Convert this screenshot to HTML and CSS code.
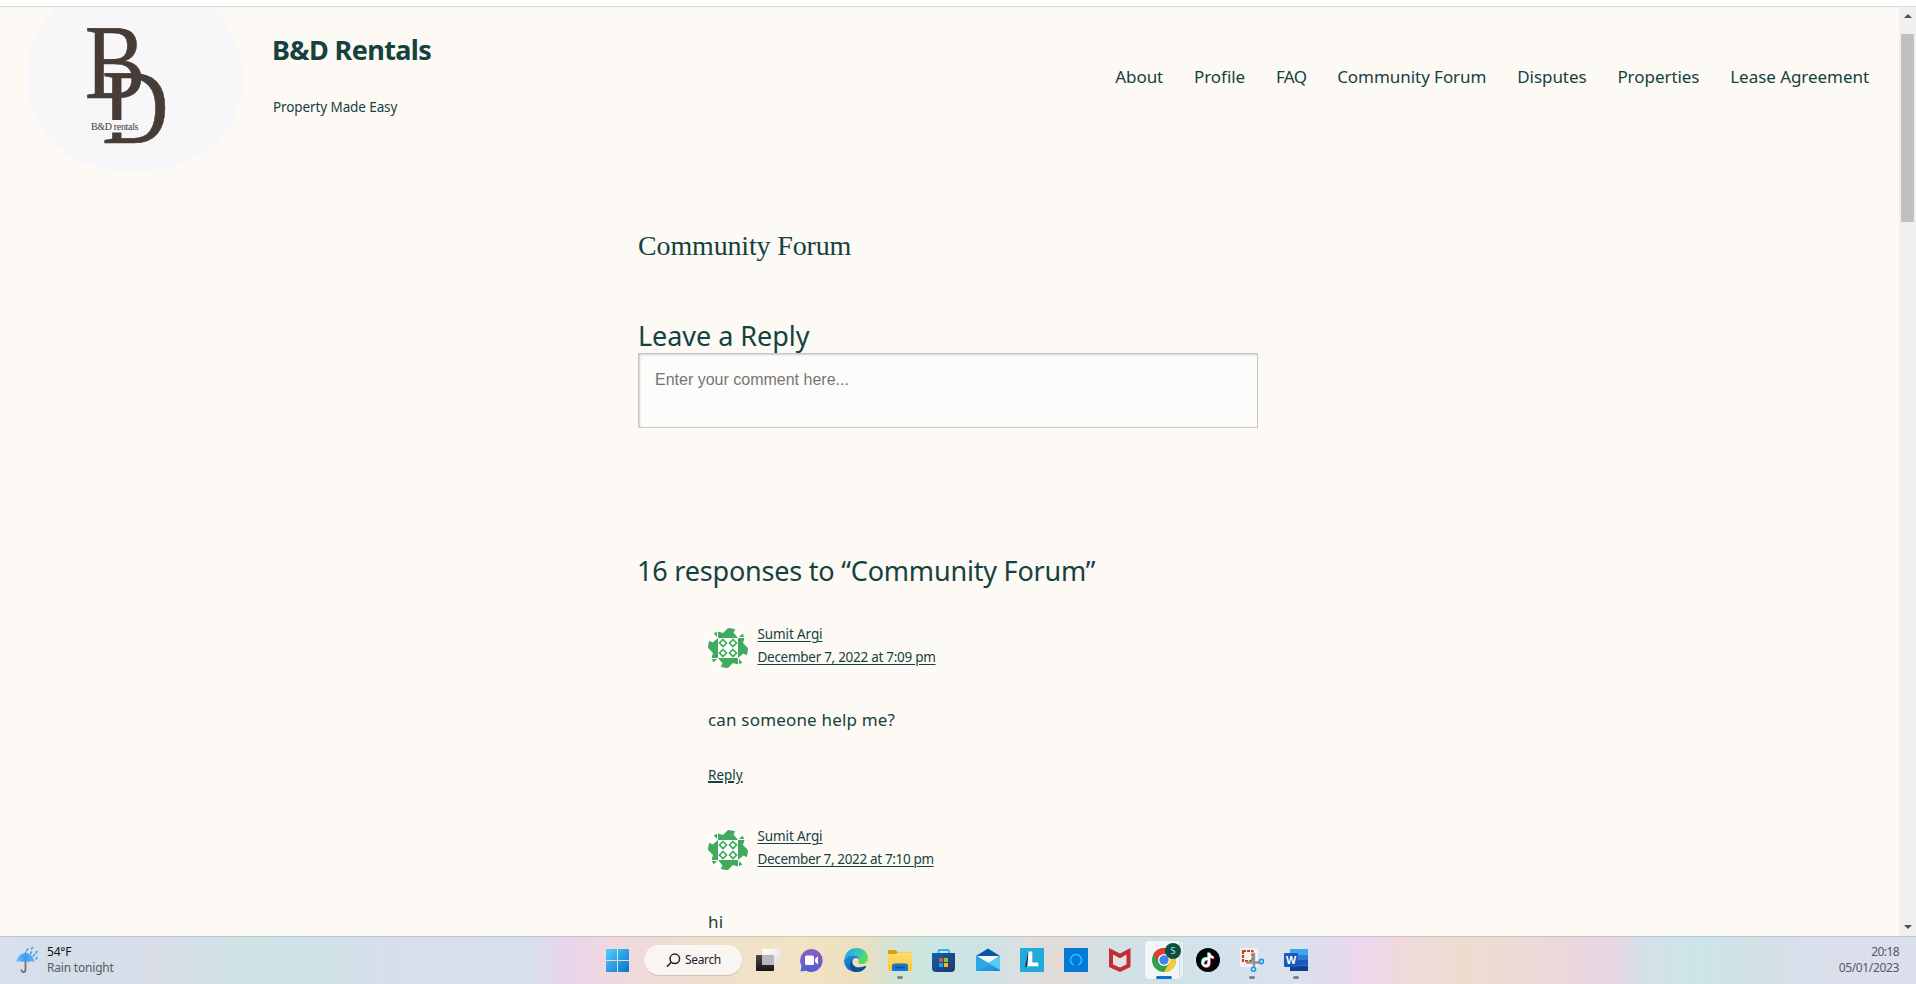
FILE: index.html
```html
<!DOCTYPE html>
<html lang="en">
<head>
<meta charset="utf-8">
<title>Community Forum – B&amp;D Rentals</title>
<link rel="stylesheet" href="styles.css">
</head>
<body>
<svg width="0" height="0" class="defs" aria-hidden="true">
  <defs>
    <linearGradient id="win" x1="0" y1="0" x2="1" y2="1"><stop offset="0" stop-color="#4fd0fb"/><stop offset="1" stop-color="#0573cf"/></linearGradient>
    <linearGradient id="dark" x1="0" y1="0" x2="0" y2="1"><stop offset="0" stop-color="#484848"/><stop offset="1" stop-color="#161616"/></linearGradient>
    <linearGradient id="light" x1="0" y1="0" x2="1" y2="1"><stop offset="0" stop-color="#ffffff"/><stop offset="1" stop-color="#dedede"/></linearGradient>
    <linearGradient id="chat" x1="0" y1="0" x2="0" y2="1"><stop offset="0" stop-color="#8a5fc0"/><stop offset="1" stop-color="#4f5fd6"/></linearGradient>
    <linearGradient id="edgeA" x1="0" y1="0" x2="1" y2=".6"><stop offset="0" stop-color="#1f9ddf"/><stop offset=".5" stop-color="#33c2cf"/><stop offset="1" stop-color="#62dc52"/></linearGradient>
    <linearGradient id="edgeB" x1="0" y1="0" x2=".6" y2="1"><stop offset="0" stop-color="#1b95dd"/><stop offset="1" stop-color="#0f5cb0"/></linearGradient>
    <linearGradient id="folder" x1="0" y1="0" x2="0" y2="1"><stop offset="0" stop-color="#ffde75"/><stop offset="1" stop-color="#fbc530"/></linearGradient>
    <linearGradient id="store" x1="0" y1="0" x2="1" y2="1"><stop offset="0" stop-color="#0f62ac"/><stop offset="1" stop-color="#243566"/></linearGradient>
    <linearGradient id="mail" x1="0" y1="0" x2="1" y2="1"><stop offset="0" stop-color="#2fb4ee"/><stop offset="1" stop-color="#1c84da"/></linearGradient>
    <linearGradient id="umb" x1="0" y1="0" x2="1" y2="0"><stop offset="0" stop-color="#6dbcf8"/><stop offset=".5" stop-color="#3e9df0"/><stop offset="1" stop-color="#62b4f6"/></linearGradient>
    <clipPath id="round"><circle cx="20" cy="20" r="20"/></clipPath>
    <symbol id="avatar" viewBox="0 0 40 40">
      <g clip-path="url(#round)">
        <rect width="40" height="40" fill="#fff"/>
        <g fill="#41ab5d">
          <g id="side"><path d="M10 3.500L15 5L20 0H28L25.500 4.500L30 10H10Z"/><path d="M4.500 4.500L9 4V9Z"/></g>
          <use href="#side" transform="rotate(90 20 20)"/>
          <use href="#side" transform="rotate(180 20 20)"/>
          <use href="#side" transform="rotate(270 20 20)"/>
        </g>
        <g fill="#fff" stroke="#41ab5d" stroke-width="1.700"><path d="M15 11.500L18.500 15L15 18.500L11.500 15Z"/><path d="M25 11.500L28.500 15L25 18.500L21.500 15Z"/><path d="M15 21.500L18.500 25L15 28.500L11.500 25Z"/><path d="M25 21.500L28.500 25L25 28.500L21.500 25Z"/></g>
      </g>
    </symbol>
  </defs>
</svg>

<div class="browser">
  <div class="page">
    <header class="site-header">
      <svg class="logo" viewBox="0 0 217 186" role="img" aria-label="B&amp;D rentals">
        <g class="mono">
          <text transform="translate(58.800 113.500) scale(.86 1)">B</text>
          <text transform="translate(76 158.800) scale(.87 1)">D</text>
        </g>
        <rect class="band" x="62" y="136" width="56" height="12.500"/>
        <text class="mark" x="65" y="145.500" textLength="47.500">B&amp;D rentals</text>
      </svg>
      <div class="brand">
        <h1>B&amp;D Rentals</h1>
        <p>Property Made Easy</p>
      </div>
      <nav class="menu">
        <a>About</a><a>Profile</a><a class="faq">FAQ</a><a>Community Forum</a><a>Disputes</a><a>Properties</a><a>Lease Agreement</a>
      </nav>
    </header>

    <main class="content">
      <h2 class="page-title">Community Forum</h2>
      <h3 class="reply-title">Leave a Reply</h3>
      <textarea class="comment-box" placeholder="Enter your comment here..."></textarea>
      <h3 class="responses-title">16 responses to “Community Forum”</h3>
      <article class="comment">
        <div class="meta">
          <svg class="avatar"><use href="#avatar"/></svg>
          <div class="by"><a class="name">Sumit Argi</a><a class="date">December 7, 2022 at 7:09 pm</a></div>
        </div>
        <p>can someone help me?</p>
        <a class="reply">Reply</a>
      </article>
      <article class="comment">
        <div class="meta">
          <svg class="avatar"><use href="#avatar"/></svg>
          <div class="by"><a class="name">Sumit Argi</a><a class="date later">December 7, 2022 at 7:10 pm</a></div>
        </div>
        <p>hi</p>
      </article>
    </main>
  </div>
  <div class="scrollbar">
    <i class="arrow up"></i>
    <i class="thumb"></i>
    <i class="arrow down"></i>
  </div>
</div>

<footer class="taskbar">
  <div class="weather">
    <svg width="26" height="28" viewBox="0 0 26 28">
      <path d="M9.500 13V23.500C9.500 27 5.500 27 5.500 23.500" fill="none" stroke="#77706e" stroke-width="1.800"/>
      <path d="M.5 16C1 10.500 5 7 9.500 7S18 10.500 18.500 16C16 15 14 15 12.500 16C11 15 8 15 6.500 16C4.500 15 2.500 15 .5 16Z" fill="url(#umb)"/>
      <path d="M9.500 5.500V7.500" stroke="#77706e"/>
      <path d="M11.800 3L10.800 4.500M16.500 1.500L15.500 3M15.500 6L14.500 7.500M21 5.500L20 7M18.500 8.500L17.500 10M21 11.500L20 13" stroke="#4c9ce8" stroke-width="1.600" stroke-linecap="round"/>
    </svg>
    <div class="weather-text"><span class="temp">54°F</span><span class="cond">Rain tonight</span></div>
  </div>

  <div class="apps">
    <svg class="app" viewBox="0 0 24 24"><path fill="url(#win)" d="M0 1.500Q0 1 .5 1H11V12H0ZM12 1H22.500Q23 1 23 1.500V12H12ZM0 13H11V24H.5Q0 24 0 23.500ZM12 13H23V23.500Q23 24 22.500 24H12Z"/></svg>
    <div class="search">
      <svg width="15" height="15" viewBox="0 0 15 15" fill="none" stroke="#222" stroke-width="1.500"><circle cx="8.800" cy="5.800" r="4.800"/><path d="M5.300 9.300L1 13.600"/></svg>
      <span>Search</span>
    </div>
    <svg class="app" viewBox="0 0 24 24"><rect y="7" width="18" height="16" rx="1" fill="url(#dark)"/><rect x="6" y="1" width="18" height="16" rx="1" fill="url(#light)"/><rect x="6" y="7" width="12" height="10" fill="#b9b9b9"/></svg>
    <svg class="app" viewBox="0 0 24 24"><path fill="url(#chat)" d="M11.500 1A11.500 11.500 0 1 1 6 22.800L.5 23.500L1.500 18A11.500 11.500 0 0 1 11.500 1Z"/><rect x="5" y="7.500" width="9" height="9.500" rx="1.500" fill="#fff"/><path d="M15 11L18 8.200V16.500L15 13.800Z" fill="#fff"/></svg>
    <svg class="app" viewBox="0 0 24 24"><path fill="url(#edgeA)" d="M.3 11C1.300 4.500 6 0 12.500 0C19.500 0 24 4.800 24 10C24 14 21 16 17.500 16C14.500 16 13.500 14.800 14.500 13.500C16 10.500 13.500 7.800 9.500 7.300C5.500 7 2 8.500 .3 11Z"/><path fill="url(#edgeB)" d="M0 12C1.500 8.500 5.500 6.800 9.500 7.300C13 7.700 15 9.500 15 11.500C12.500 8.500 8.500 10 8.200 13.500C8 18 13 21.500 20 18.500C21.500 17.900 22.500 18 22 19C20 22 16.500 24 12 24C5 24 0 19 0 12Z"/><path fill="#124e96" d="M8.200 13.500C8 18 13 21.500 20 18.500C21.500 17.900 22.500 18 22 19C20 22 16.500 24 12.500 24C5.500 23.500 3.500 15 9.500 10.500C8.600 11.300 8.300 12.300 8.200 13.500Z"/></svg>
    <div class="slot">
      <svg class="app" viewBox="0 0 24 24"><path fill="#dd9c08" d="M0 3Q0 2 1 2H7.500L9.500 4H22.500Q23.500 4 23.500 5V9H0Z"/><path fill="url(#folder)" d="M0 6H8L10 4.300H23Q24 4.300 24 5.300V22Q24 23 23 23H1Q0 23 0 22Z"/><path fill="#1176d0" d="M4 23V18.500Q4 15.500 7 15.500H17.500Q20 15.500 20 18.500V23Z"/><path d="M7.500 19.500H17" stroke="#084b91" stroke-width="1.500"/></svg>
      <i class="running"></i>
    </div>
    <svg class="app" viewBox="0 0 24 24"><path d="M6.500 6V3Q6.500 2 7.500 2H16Q17 2 17 3V6" fill="none" stroke="#2fb3ee" stroke-width="1.800"/><path d="M0 5H23V20Q23 24 19 24H4Q0 24 0 20Z" fill="url(#store)"/><path fill="#f1511b" d="M7 10H11V14H7Z"/><path fill="#80cc28" d="M12 10H16V14H12Z"/><path fill="#00adef" d="M7 15H11V19H7Z"/><path fill="#fbbc09" d="M12 15H16V19H12Z"/></svg>
    <svg class="app" viewBox="0 0 24 24"><path d="M0 8L12 .5L24 8L12 16Z" fill="#0b56a4"/><path d="M1 8H23L12 16Z" fill="#f6f6f6"/><path d="M0 8L24 21V22Q24 23 23 23H1Q0 23 0 22Z" fill="#2ba8ea"/><path d="M24 8V22.500L12 15Z" fill="#56caf6"/><path d="M12 15L24 22Q24 23 23 23H1Q0 23 0 22.500Z" fill="url(#mail)"/></svg>
    <svg class="app" viewBox="0 0 24 24"><rect width="24" height="24" fill="#21abda"/><path fill="#12305a" d="M8 4L5 19.500L9 18Z"/><path d="M8.500 3.500H12.300V14.500H18.300V18.300H8.500L7.300 19.500Z" fill="#fff"/></svg>
    <svg class="app" viewBox="0 0 24 24"><rect width="24" height="24" fill="#0478d6"/><path d="M9.600 17A5.500 5.500 0 1 1 14.400 17" fill="none" stroke="#17cdf4" stroke-width="1.500"/></svg>
    <svg class="app" viewBox="0 0 24 24"><path fill="#c22e31" d="M1 0L12 5.500L22.500 0V19L12 24L1 19Z"/><path fill="#dfe3e6" d="M5 6.500L12 10.300L18.500 6.500V16.500L12 19.500L5 16.500Z"/></svg>
    <div class="slot active">
      <svg class="app" viewBox="0 0 24 24"><circle cx="12" cy="12" r="12" fill="#2ca24c"/><path fill="#e33b2e" d="M1.600 6A12 12 0 0 1 22.400 6H12L6.800 15Z"/><path fill="#fcc934" d="M22.400 6A12 12 0 0 1 12 24L17.200 15L12 6Z"/><circle cx="12" cy="12" r="6" fill="#fff"/><circle cx="12" cy="12" r="4.700" fill="#3f83ee"/></svg>
      <b class="profile">S</b>
      <i class="running"></i>
    </div>
    <svg class="app" viewBox="0 0 24 24"><circle cx="12" cy="12" r="12" fill="#050505"/><g fill="none" stroke-width="2.300"><path stroke="#25f4ee" d="M11 10.200C5 9.500 4.500 17.500 9 17.500C11.500 17.500 12.300 16 12.300 14V4.500C12.800 7.300 14.500 8.700 17 8.900"/><path stroke="#fe2c55" d="M12.500 11.500C6.500 10.800 6 19 10.200 19C12.800 19 13.700 17 13.700 15V5.500C14.200 8.300 16 10 18.300 10"/><path stroke="#fff" d="M11.800 10.800C5.800 10.200 5.500 18.200 9.600 18.200C12 18.200 13 16.500 13 14.500V5C13.500 7.800 15.200 9.300 17.600 9.500"/></g></svg>
    <div class="slot">
      <svg class="app" viewBox="0 0 24 24"><rect width="18" height="19" rx="2" fill="#f5f3f1"/><rect x="3" y="3" width="9.500" height="10" fill="none" stroke="#cb4215" stroke-width="2.200" stroke-dasharray="3 1"/><path d="M14 5V19M6 14.500H20" stroke="#8b949b" stroke-width="2.400"/><circle cx="21.500" cy="13.500" r="2" fill="#fff" stroke="#229be3" stroke-width="1.800"/><circle cx="13.500" cy="21.300" r="2" fill="#fff" stroke="#229be3" stroke-width="1.800"/></svg>
      <i class="running"></i>
    </div>
    <div class="slot">
      <svg class="app" viewBox="0 0 24 24"><path fill="#41a5ee" d="M6 1H24V7H6Z"/><path fill="#2b7cd3" d="M6 7H24V12H6Z"/><path fill="#185abd" d="M6 12H24V17.500H6Z"/><path fill="#103f91" d="M6 17.500H24V23H6Z"/><rect y="5" width="14" height="14" rx="1" fill="#185abd"/><text class="w" x="7" y="16.200" text-anchor="middle">W</text></svg>
      <i class="running"></i>
    </div>
  </div>

  <div class="clock"><span class="time">20:18</span><span class="day">05/01/2023</span></div>
</footer>
</body>
</html>
```
FILE: styles.css
```css
* { box-sizing: border-box; }
body {
  margin: 0;
  width: 1916px;
  height: 984px;
  overflow: hidden;
  display: flex;
  flex-direction: column;
  background: #fff;
  font-family: "Noto Sans", sans-serif;
  color: #14423f;
}
h1, h2, h3, p { margin: 0; font-weight: 400; }
.defs { display: block; flex: none; }

.browser {
  margin-top: 6px;
  height: 930px;
  flex: none;
  display: flex;
  border-top: 1px solid #dadcda;
  background: #fdf9f4;
}
.page { flex: 1; overflow: hidden; height: 929px; }

.site-header {
  margin-top: -23px;
  height: 186px;
  padding: 0 30px 0 26px;
  display: flex;
  align-items: center;
}
.logo {
  width: 217px;
  height: 186px;
  flex: none;
  border-radius: 93px;
  background: #f7f7fa;
  fill: #483c37;
  font-family: "Liberation Serif", serif;
}
.mono { font-size: 106px; stroke: #483c37; stroke-width: .6px; }
.band { fill: #f7f7fa; }
.mark { font-size: 10px; }
.brand { align-self: flex-start; margin-left: 30px; padding-top: 46px; }
.brand h1 { font-weight: 700; font-size: 27px; line-height: 40px; letter-spacing: -.6px; margin-left: -1px; }
.brand p { margin-top: 25px; font-size: 13.5px; line-height: 24px; letter-spacing: -.1px; }
.menu { margin-left: auto; display: flex; gap: 30.800px; font-size: 17px; line-height: 26px; letter-spacing: -.05px; }
.faq { letter-spacing: -.6px; }

.content { width: 620px; margin-left: 638px; }
.page-title { margin-top: 56px; font: 28px/40px "Liberation Serif", serif; letter-spacing: -.15px; }
.reply-title { margin-top: 53px; font-size: 27px; line-height: 34px; letter-spacing: -.05px; }
.comment-box {
  display: block;
  width: 620px;
  height: 75px;
  padding: 14px 16px;
  border: 1px solid #c4c7c8;
  border-radius: 0;
  background: #fdfcfa;
  box-shadow: inset 1px 1px 2px #ccced0;
  resize: none;
  font: 16px/24px "Liberation Sans", sans-serif;
}
.comment-box::placeholder { color: #757575; }
.responses-title { margin-top: 123px; margin-left: -1px; font-size: 27px; line-height: 40px; letter-spacing: -.2px; }

.comment { margin: 32px 0 0 70px; }
.comment + .comment { margin-top: 38px; }
.meta { display: flex; gap: 9.500px; height: 46px; font-size: 13.5px; line-height: 22.700px; }
.avatar { width: 40px; height: 40px; margin-top: 5px; flex: none; }
.by { display: flex; flex-direction: column; align-items: flex-start; }
.by a, .reply { text-decoration: underline; text-decoration-thickness: 1px; text-underline-offset: 2px; }
.name { letter-spacing: -.11px; }
.date { letter-spacing: -.28px; }
.date.later { letter-spacing: -.35px; }
.comment p { margin-top: 37px; font-size: 17px; line-height: 28px; letter-spacing: .18px; }
.comment .reply { display: block; width: max-content; margin-top: 30px; font-size: 13.5px; line-height: 23px; text-decoration-thickness: 2px; text-underline-offset: 1px; }

.scrollbar { width: 17px; background: #f0f0f0; display: flex; flex-direction: column; align-items: center; padding: 7px 0; }
.arrow { width: 0; height: 0; border: 4px solid transparent; }
.arrow.up { border-top: 0; border-bottom-color: #505050; }
.thumb { width: 13px; height: 188px; margin-top: 16px; background: #c1c1c1; }
.arrow.down { border-bottom: 0; border-top-color: #505050; margin-top: auto; }

.taskbar {
  height: 48px;
  flex: none;
  display: grid;
  grid-template-columns: 1fr auto 1fr;
  align-items: center;
  padding-right: 2px;
  box-shadow: inset 0 1px rgba(90, 90, 110, .2);
  background: linear-gradient(90deg, #dadfec 0, #d3dfe9 60px, #d8dde8 150px, #cfe2e6 240px, #cfe2e7 310px, #d8deeb 400px, #d8dfec 530px, #ead4e9 570px, #efd8e0 610px, #efdfce 700px, #f2e3c4 800px, #ecdfc0 860px, #d2e3d6 895px, #cbe6e0 930px, #cce3e6 980px, #e0dede 1030px, #e2dad9 1060px, #d3e0e6 1110px, #d2e3ea 1200px, #dbe1ee 1300px, #e2dbec 1335px, #efd7ee 1362px, #efd9dd 1400px, #efdccf 1460px, #ebd8dc 1560px, #e8d6e2 1610px, #d5e0e8 1640px, #cbe5e9 1700px, #d3e0e6 1760px, #d9dfeb 1800px, #dcdfec 1916px);
  font-size: 12px;
  line-height: 16px;
}
.weather { display: flex; align-items: center; padding-left: 16px; gap: 5px; }
.weather-text { display: flex; flex-direction: column; }
.temp { color: #111; letter-spacing: -.2px; }
.cond { color: #555a62; letter-spacing: -.2px; }
.apps { display: flex; align-items: center; gap: 20px; }
.app { display: block; width: 24px; height: 24px; flex: none; }
.search {
  width: 98px;
  height: 30px;
  margin: 0 -6px;
  padding-left: 22px;
  display: flex;
  align-items: center;
  gap: 4px;
  border-radius: 15px;
  background: #fbf5f1;
  box-shadow: 0 1px 1px rgba(120, 90, 80, .25);
  color: #222;
  letter-spacing: -.35px;
}
.slot { position: relative; }
.slot .app { position: relative; }
.running { position: absolute; left: 9px; top: 28px; width: 6px; height: 3px; border-radius: 2px; background: #7d8287; }
.active::before {
  content: "";
  position: absolute;
  left: -7px;
  top: -7px;
  width: 38px;
  height: 38px;
  border-radius: 4px;
  background: linear-gradient(90deg, #f1f5f7 34px, #cfdce2 34px 35px, #e7eef2 35px);
  box-shadow: 0 0 1px #b9c6cc;
}
.active .running { left: 4px; width: 16px; background: #0b74d1; }
.profile {
  position: absolute;
  left: 13px;
  top: -5px;
  width: 16px;
  height: 16px;
  border-radius: 50%;
  background: #0a4f43;
  color: #d5e4e0;
  font-weight: 400;
  font-size: 9px;
  line-height: 16px;
  text-align: center;
}
.w { font: 700 10.500px "Noto Sans", sans-serif; fill: #fff; }
.clock { display: flex; flex-direction: column; align-items: flex-end; padding-right: 15px; color: #55585f; }
.time { letter-spacing: -.6px; }
.day { letter-spacing: -.35px; }
```
